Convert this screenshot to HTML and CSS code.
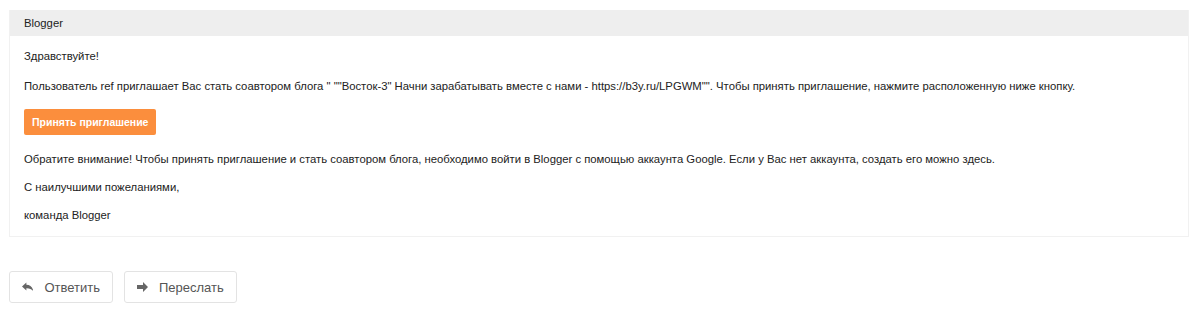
FILE: index.html
```html
<!DOCTYPE html>
<html lang="ru">
<head>
<meta charset="utf-8">
<title>Blogger</title>
<link rel="stylesheet" href="styles.css">
</head>
<body>
<div class="card">
  <div class="card-head">Blogger</div>
  <div class="card-body">
    <p class="l1">Здравствуйте!</p>
    <p class="l2">Пользователь ref приглашает Вас стать соавтором блога " ""Восток-3" Начни зарабатывать вместе с нами - https://b3y.ru/LPGWM"". Чтобы принять приглашение, нажмите расположенную ниже кнопку.</p>
    <div class="accept-wrap"><a class="accept">Принять приглашение</a></div>
    <p class="l3">Обратите внимание! Чтобы принять приглашение и стать соавтором блога, необходимо войти в Blogger с помощью аккаунта Google. Если у Вас нет аккаунта, создать его можно здесь.</p>
    <p class="l4">С наилучшими пожеланиями,</p>
    <p class="l4">команда Blogger</p>
  </div>
</div>
<div class="actions">
  <button class="act act-reply">
    <svg width="12" height="10" viewBox="0 0 12 10"><path d="M0 4.5 L4.6 0.3 V2.7 C8.5 2.8 11.2 5 12 9.6 C10.3 7.2 8 6.2 4.6 6.3 V8.7 Z" fill="#666"/></svg>
    <span>Ответить</span>
  </button>
  <button class="act act-fwd">
    <svg width="11" height="10" viewBox="0 0 11 10"><path d="M0 3 H6 V0 L11 5 L6 10 V7 H0 Z" fill="#666"/></svg>
    <span>Переслать</span>
  </button>
</div>
</body>
</html>
```
FILE: styles.css
```css
html, body {
  margin: 0;
  padding: 0;
  background: #fff;
}
body {
  padding: 10px 11px 0 9px;
  font-family: "Liberation Sans", Arial, Helvetica, sans-serif;
  font-size: 11.3px;
  color: #222;
}
.card {
  border: 1px solid #f1f1f1;
  border-top: 0;
  background: #fff;
}
.card-head {
  background: #eeeeee;
  height: 26px;
  line-height: 26px;
  padding-left: 14px;
  color: #222;
}
.card-body {
  padding: 12px 14px 13px 14px;
}
.card-body p {
  margin: 0;
  line-height: 16px;
}
.card-body .l2 { margin-top: 14px; }
.accept-wrap {
  margin-top: 15px;
  display: flex;
}
.accept {
  display: block;
  background: #fb8e3d;
  color: #fff;
  font-weight: bold;
  font-size: 10.5px;
  height: 26px;
  line-height: 26px;
  padding: 0 8px;
  border-radius: 2px;
}
.card-body .l3 { margin-top: 16px; }
.card-body .l4 { margin-top: 12px; }
.actions {
  display: flex;
  gap: 11px;
  margin-top: 34px;
}
.act {
  display: flex;
  align-items: center;
  height: 32px;
  padding: 0 12px;
  background: #fff;
  border: 1px solid #e3e3e3;
  border-radius: 3px;
  font-family: "Liberation Sans", Arial, Helvetica, sans-serif;
  font-size: 13px;
  color: #555;
  gap: 11px;
}
.act-reply { width: 104px; }
.act-fwd { width: 113px; }
```
